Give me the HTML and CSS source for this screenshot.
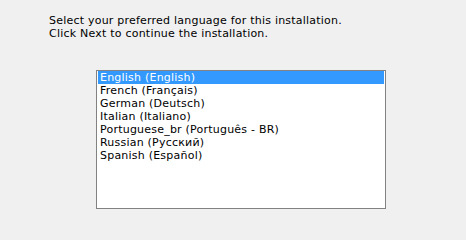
FILE: index.html
```html
<!DOCTYPE html>
<html>
<head>
<meta charset="utf-8">
<link rel="stylesheet" href="styles.css">
</head>
<body>
<div class="page">
  <p class="intro">Select your preferred language for this installation.<br>Click Next to continue the installation.</p>
  <ul class="listbox">
    <li class="item selected">English (English)</li>
    <li class="item">French (Français)</li>
    <li class="item">German (Deutsch)</li>
    <li class="item">Italian (Italiano)</li>
    <li class="item">Portuguese_br (Português - BR)</li>
    <li class="item">Russian (Русский)</li>
    <li class="item">Spanish (Español)</li>
  </ul>
</div>
</body>
</html>
```
FILE: styles.css
```css
html, body {
  margin: 0;
  padding: 0;
  background: #f0f0f0;
}
.page {
  width: 466px;
  height: 224px;
  font-family: "DejaVu Sans", Verdana, sans-serif;
  font-size: 11px;
  letter-spacing: 0.22px;
  color: #000;
  padding: 14px 0 0 49px;
  box-sizing: border-box;
}
.intro {
  margin: 0;
  line-height: 13px;
}
.listbox {
  list-style: none;
  margin: 30px 0 0 47px;
  padding: 0 1px;
  width: 286px;
  height: 137px;
  border: 1px solid #828282;
  background: #fff;
}
.item {
  height: 13px;
  line-height: 13px;
  padding-left: 2px;
  white-space: nowrap;
}
.selected {
  background: #3399ff;
  color: #fff;
}
```
